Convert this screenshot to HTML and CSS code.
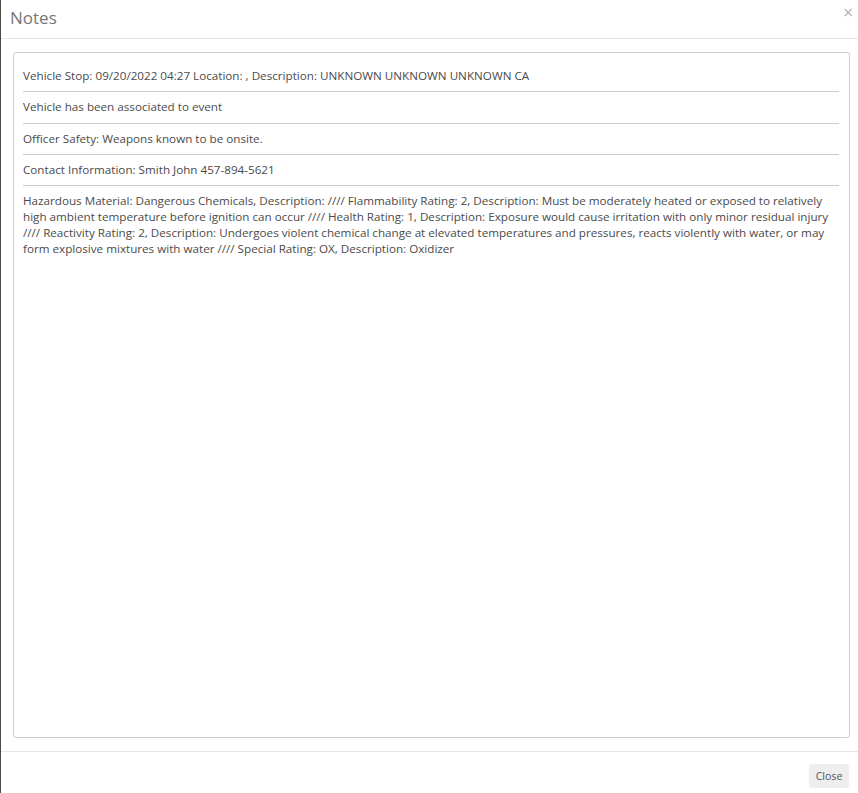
FILE: index.html
```html
<!DOCTYPE html>
<html>
<head>
<meta charset="utf-8">
<link rel="stylesheet" href="styles.css">
</head>
<body>
<div class="modal">
  <div class="modal-header">
    <h4 class="title">Notes</h4>
    <span class="close-x">&times;</span>
  </div>
  <div class="modal-body">
    <div class="notes-box">
      <div class="note">Vehicle Stop: 09/20/2022 04:27 Location: , Description: UNKNOWN UNKNOWN UNKNOWN CA</div>
      <div class="note">Vehicle has been associated to event</div>
      <div class="note">Officer Safety: Weapons known to be onsite.</div>
      <div class="note">Contact Information: Smith John 457-894-5621</div>
      <div class="note last">Hazardous Material: Dangerous Chemicals, Description: //// Flammability Rating: 2, Description: Must be moderately heated or exposed to relatively high ambient temperature before ignition can occur //// Health Rating: 1, Description: Exposure would cause irritation with only minor residual injury //// Reactivity Rating: 2, Description: Undergoes violent chemical change at elevated temperatures and pressures, reacts violently with water, or may form explosive mixtures with water //// Special Rating: OX, Description: Oxidizer</div>
    </div>
  </div>
  <div class="modal-footer">
    <button class="btn-close">Close</button>
  </div>
</div>
</body>
</html>
```
FILE: styles.css
```css
html, body {
  margin: 0;
  padding: 0;
  background: #fff;
}
body {
  font-family: "Open Sans", "Liberation Sans", sans-serif;
  color: #4a4a4a;
}
.modal {
  height: 793px;
  display: flex;
  flex-direction: column;
  border-left: 1px solid #4a4a4a;
  box-sizing: border-box;
}
.modal-header {
  height: 38px;
  border-bottom: 1px solid #e5e5e5;
  display: flex;
  align-items: center;
  justify-content: space-between;
  padding: 0 4px 0 9px;
  flex: none;
}
.title {
  margin: 0;
  font-size: 17px;
  font-weight: 400;
  color: #777;
  line-height: 20px;
  margin-top: -3px;
}
.close-x {
  font-family: "DejaVu Sans", sans-serif;
  font-size: 14px;
  color: #b0b0b0;
  align-self: flex-start;
  margin-top: 3px;
  line-height: 18px;
}
.modal-body {
  flex: 1;
  padding: 13px 8px 13px 12px;
  display: flex;
  min-height: 0;
}
.notes-box {
  flex: 1;
  border: 1px solid #ccc;
  border-radius: 3px;
  padding: 8px 10px 6px 9px;
}
.note {
  font-size: 11.66px;
  line-height: 16px;
  padding: 7.17px 0;
  border-bottom: 1px solid #ccc;
}
.note.last {
  border-bottom: none;
}
.modal-footer {
  flex: none;
  border-top: 1px solid #e5e5e5;
  display: flex;
  justify-content: flex-end;
  align-items: flex-start;
  padding: 12px 9px 0 0;
  box-sizing: border-box;
  height: 42px;
}
.btn-close {
  font-family: "Open Sans", "Liberation Sans", sans-serif;
  font-size: 10.6px;
  color: #555;
  background: #eee;
  border: none;
  border-radius: 3px;
  width: 40px;
  height: 24px;
  padding: 0;
}
```
